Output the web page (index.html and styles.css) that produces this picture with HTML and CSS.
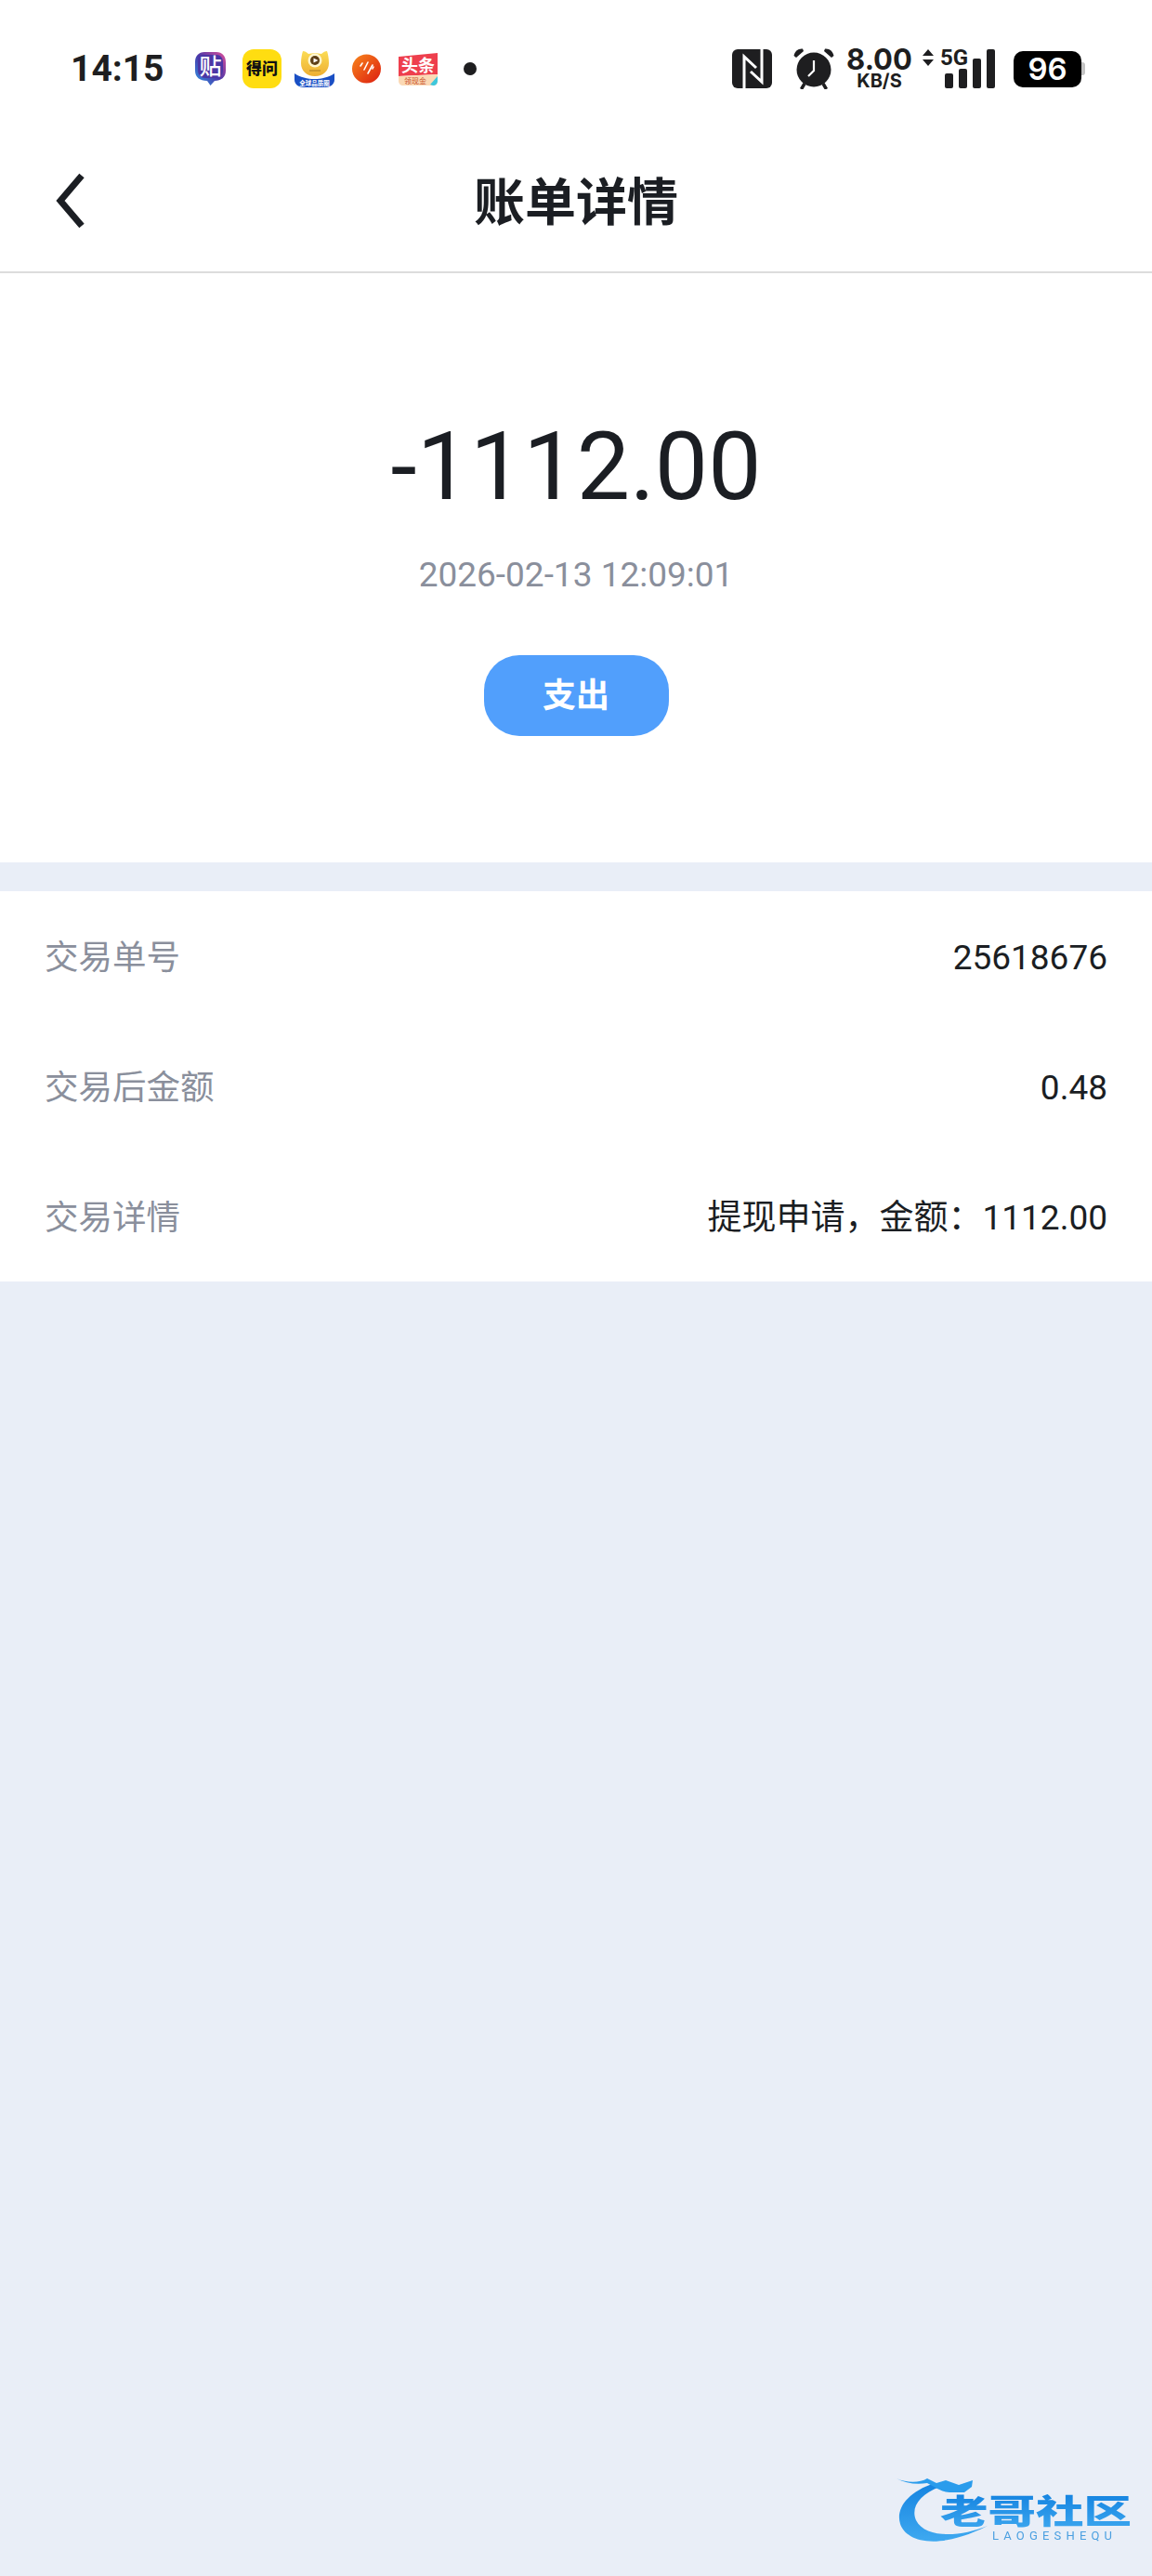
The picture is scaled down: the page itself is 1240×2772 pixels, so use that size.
FILE: index.html
```html
<!DOCTYPE html>
<html lang="zh-CN">
<head>
    <meta charset="UTF-8">
    <meta name="viewport" content="width=device-width, initial-scale=1.0">
    <title>账单详情</title>
    <link rel="stylesheet" href="styles.css">
</head>
<body>
    <!-- Status bar -->
    <div class="status-bar">
        <div class="status-left">
            <span class="clock">14:15</span>
            <svg class="app-icon tie" viewBox="0 0 33 36">
                <defs>
                    <linearGradient id="tieBg" x1="0" y1="1" x2="1" y2="0">
                        <stop offset="0" stop-color="#2f9be8"/>
                        <stop offset="0.5" stop-color="#4a37a8"/>
                        <stop offset="1" stop-color="#e0509a"/>
                    </linearGradient>
                </defs>
                <path d="M10 0H23C29 0 33 4 33 11V20C33 27 28 31 21 31L16.500 36L13 31C5 31 0 27 0 20V11C0 4 4 0 10 0Z" fill="url(#tieBg)"/>
                <path d="M9 3H23C27 3 30 6 30 11V19C30 25 26 28 21 28H12C6 28 3 25 3 19V9C3 5 5 3 9 3Z" fill="#4b37a5"/>
                <text x="16.500" y="24" text-anchor="middle" class="tie-text">贴</text>
            </svg>
            <span class="app-icon dewen">得问</span>
            <svg class="app-icon tiger" viewBox="0 0 43 39">
                <defs>
                    <linearGradient id="tigerHead" x1="0" y1="0" x2="0" y2="1">
                        <stop offset="0" stop-color="#fbdc55"/>
                        <stop offset="1" stop-color="#eeae32"/>
                    </linearGradient>
                </defs>
                <path d="M9 0C11 0 13 1 15 3C19 2 25 2 29 3C31 1 33 0 35 0C36 3 37 8 37 13C37 21 31 27 22 27C13 27 7 21 7 13C7 8 8 3 9 0Z" fill="url(#tigerHead)"/>
                <circle cx="22" cy="10" r="7.500" fill="#fff6cf"/>
                <circle cx="22" cy="10" r="5" fill="#5e3f16"/>
                <path d="M20.500 7.500L25.500 10L20.500 12.500Z" fill="#fff"/>
                <path d="M16 21H28" stroke="#a87a20" stroke-width="1"/>
                <path d="M0 24C6 28 14 30 21.500 30C29 30 37 28 43 24V31C43 36 38 39 33 39H10C5 39 0 36 0 31Z" fill="#1a4fc4"/>
                <text x="21.500" y="37" text-anchor="middle" class="tiger-text">全球品质圈</text>
            </svg>
            <svg class="app-icon round" viewBox="0 0 31 32">
                <defs>
                    <linearGradient id="roundBg" x1="0" y1="0" x2="1" y2="1">
                        <stop offset="0" stop-color="#f8861c"/>
                        <stop offset="1" stop-color="#dc1c10"/>
                    </linearGradient>
                </defs>
                <circle cx="15.500" cy="16" r="15.500" fill="url(#roundBg)"/>
                <path d="M9 13L11 10M13 17L17 9M17 21L22 12M22 16L23 14" stroke="#fff" stroke-width="1.600" stroke-linecap="round"/>
            </svg>
            <svg class="app-icon toutiao" viewBox="0 0 44 35">
                <path d="M1 4L43 0V23L1 25Z" fill="#ee3f4d"/>
                <path d="M1 25L43 23V30C43 33 41 35 38 35H6C3 35 1 33 1 30Z" fill="#fbd9b5"/>
                <text x="22" y="20" text-anchor="middle" class="toutiao-text">头条</text>
                <text x="19" y="33" text-anchor="middle" class="toutiao-sub">领现金</text>
                <path d="M35 34L43 25V30C43 33 41 35 38 35Z" fill="#3ec7dc"/>
            </svg>
            <span class="more-dot"></span>
        </div>
        <div class="status-right">
            <svg class="nfc" viewBox="0 0 43 42">
                <rect width="43" height="42" rx="6" fill="#1e1e20"/>
                <path d="M13 42V8L26 20M32 0V35L20 24" fill="none" stroke="#fff" stroke-width="3"/>
            </svg>
            <svg class="alarm" viewBox="0 0 44 44">
                <circle cx="22" cy="23" r="18.500" fill="#1e1e20"/>
                <path d="M0.500 8C1.500 3 5 0 10 0.500L11 3L3 10Z M43.500 8C42.500 3 39 0 34 0.500L33 3L41 10Z" fill="#1e1e20"/>
                <path d="M12 38L8.500 44M32 38L35.500 44" stroke="#1e1e20" stroke-width="3.500"/>
                <path d="M22 13V24L16 30" fill="none" stroke="#fff" stroke-width="2.200"/>
            </svg>
            <div class="speed">
                <span class="speed-num">8.00</span>
                <span class="speed-unit">KB/S</span>
            </div>
            <svg class="updown" viewBox="0 0 12 18">
                <path d="M6 0L12 7H0Z M6 18L12 11H0Z" fill="#1e1e20"/>
            </svg>
            <div class="signal">
                <span class="net-type">5G</span>
                <div class="bars">
                    <span class="bar bar1"></span>
                    <span class="bar bar2"></span>
                    <span class="bar bar3"></span>
                    <span class="bar bar4"></span>
                </div>
            </div>
            <div class="battery">
                <span class="battery-body">96</span>
                <span class="battery-nub"></span>
            </div>
        </div>
    </div>

    <!-- Title bar -->
    <header class="nav-bar">
        <svg class="back-icon" viewBox="0 0 34 60">
            <path d="M30 3L7 30L30 57" fill="none" stroke="#1b1e23" stroke-width="7"/>
        </svg>
        <h1>账单详情</h1>
    </header>

    <section class="summary">
        <div class="amount">-1112.00</div>
        <div class="date">2026-02-13 12:09:01</div>
        <div class="type-pill">支出</div>
    </section>

    <section class="details">
        <div class="row">
            <span class="label">交易单号</span>
            <span class="value">25618676</span>
        </div>
        <div class="row">
            <span class="label">交易后金额</span>
            <span class="value">0.48</span>
        </div>
        <div class="row">
            <span class="label">交易详情</span>
            <span class="value">提现申请，金额：1112.00</span>
        </div>
    </section>

    <!-- Watermark -->
    <svg class="watermark" viewBox="0 0 270 90">
        <defs>
            <linearGradient id="markBlue" x1="0" y1="0" x2="0" y2="1">
                <stop offset="0" stop-color="#1583e0"/>
                <stop offset="1" stop-color="#3fa9f0"/>
            </linearGradient>
        </defs>
        <path d="M44 20C14 30 2 48 7 64C13 82 45 94 101 66C72 78 34 80 24 60C18 46 28 32 50 24Z" fill="url(#markBlue)"/>
        <path d="M3 15C14 20 28 20 36 15L46 20L56 17L70 22L85 17L84 24L76 30L60 30C52 30 44 24 36 20C24 22 12 20 3 15Z" fill="#2a9cec"/>
        <text x="50" y="64" textLength="206" lengthAdjust="spacingAndGlyphs" class="mark-name">老哥社区</text>
        <text x="106" y="81" textLength="129" class="mark-sub">LAOGESHEQU</text>
    </svg>
</body>
</html>
```

FILE: styles.css
```css
html, body {
    margin: 0;
    padding: 0;
}

body {
    position: relative;
    min-height: 2772px;
    background: #e9eef7;
    color: #1b1e23;
    font-family: Roboto, "Noto Sans CJK SC", sans-serif;
}

/* Status bar */
.status-bar {
    display: flex;
    justify-content: space-between;
    align-items: center;
    box-sizing: border-box;
    height: 142px;
    padding: 6px 72px 0 76px;
    background: #fff;
}

.status-left, .status-right {
    display: flex;
    align-items: center;
}

.clock {
    width: 134px;
    font-size: 39px;
    font-weight: 700;
    color: #1e1e20;
}

.app-icon {
    display: block;
    flex-shrink: 0;
}

.tie {
    width: 33px;
    height: 36px;
    margin-right: 18px;
}

.tie-text {
    font-size: 24px;
    font-weight: 500;
    fill: #fff;
}

.dewen {
    width: 42px;
    height: 42px;
    margin-right: 14px;
    border-radius: 12px;
    background: #ffdd11;
    color: #111;
    font-size: 17px;
    font-weight: 900;
    line-height: 42px;
    text-align: center;
    white-space: nowrap;
}

.tiger {
    width: 43px;
    height: 39px;
    margin-right: 19px;
}

.tiger-text {
    font-size: 6.500px;
    font-weight: 700;
    fill: #fff;
}

.round {
    width: 31px;
    height: 32px;
    margin-right: 18px;
}

.toutiao {
    width: 44px;
    height: 35px;
    margin-right: 27px;
}

.toutiao-text {
    font-size: 18px;
    font-weight: 700;
    fill: #fff;
}

.toutiao-sub {
    font-size: 8px;
    fill: #c8502a;
}

.more-dot {
    width: 14px;
    height: 14px;
    border-radius: 50%;
    background: #1e1e20;
}

.nfc {
    width: 43px;
    height: 42px;
    margin-right: 23px;
}

.alarm {
    width: 44px;
    height: 44px;
    margin-right: 14px;
}

.speed {
    display: flex;
    flex-direction: column;
    align-items: center;
    width: 69px;
    margin-right: 12px;
    color: #1e1e20;
    font-family: Inter, sans-serif;
    font-weight: 700;
}

.speed-num {
    font-size: 31px;
    line-height: 26px;
}

.speed-unit {
    font-size: 20px;
    line-height: 20px;
}

.updown {
    width: 12px;
    height: 18px;
    margin: 0 7px 24px 0;
}

.signal {
    position: relative;
    width: 59px;
    height: 42px;
    margin-right: 20px;
}

.net-type {
    position: absolute;
    top: -3px;
    left: 0;
    font-size: 24px;
    font-weight: 700;
    line-height: 24px;
    color: #1e1e20;
}

.bars {
    display: flex;
    justify-content: flex-end;
    align-items: flex-end;
    gap: 6px;
    height: 100%;
}

.bar {
    width: 9px;
    border-radius: 2px;
    background: #1e1e20;
}

.bar1 { height: 16px; }
.bar2 { height: 21px; }
.bar3 { height: 32px; }
.bar4 { height: 42px; }

.battery {
    display: flex;
    align-items: center;
}

.battery-body {
    width: 73px;
    height: 39px;
    border-radius: 10px;
    background: #000;
    color: #fff;
    font-family: Inter, sans-serif;
    font-size: 33px;
    font-weight: 600;
    line-height: 39px;
    text-align: center;
}

.battery-nub {
    width: 4px;
    height: 14px;
    border-radius: 0 3px 3px 0;
    background: #c4c4c4;
}

/* Title bar */
.nav-bar {
    position: relative;
    display: flex;
    justify-content: center;
    align-items: center;
    box-sizing: border-box;
    height: 152px;
    padding-bottom: 9px;
    background: #fff;
    border-bottom: 2px solid #dcdcdc;
}

.nav-bar h1 {
    margin: 0;
    font-size: 55px;
    font-weight: 700;
    color: #1b1e23;
}

.back-icon {
    position: absolute;
    left: 58px;
    top: 44px;
    width: 34px;
    height: 60px;
}

/* Amount block */
.summary {
    display: flex;
    flex-direction: column;
    align-items: center;
    padding: 148px 0 136px;
    background: #fff;
}

.amount {
    font-size: 102px;
    line-height: 120px;
}

.date {
    margin-top: 35px;
    font-size: 37px;
    line-height: 44px;
    color: #8a8f9c;
}

.type-pill {
    width: 199px;
    height: 87px;
    margin-top: 64px;
    border-radius: 38px;
    background: #519ffc;
    color: #fff;
    font-size: 36px;
    font-weight: 700;
    line-height: 89px;
    text-align: center;
}

/* Detail rows */
.details {
    margin-top: 31px;
    background: #fff;
}

.row {
    display: flex;
    justify-content: space-between;
    align-items: baseline;
    height: 140px;
    padding: 0 48px;
    line-height: 144px;
}

.label {
    color: #8a8f9c;
    font-size: 36.500px;
}

.value {
    color: #1b1e23;
    font-size: 37px;
}

/* Watermark */
.watermark {
    position: absolute;
    left: 962px;
    top: 2652px;
    width: 270px;
    height: 90px;
    filter: blur(0.6px);
}

.mark-name {
    font-size: 36px;
    font-weight: 900;
    fill: url(#markBlue);
}

.mark-sub {
    font-size: 13px;
    fill: #4a9fe0;
}
```
